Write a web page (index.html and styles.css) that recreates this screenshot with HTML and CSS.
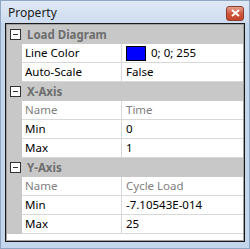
FILE: index.html
```html
<!DOCTYPE html>
<html lang="en">
<head>
    <meta charset="UTF-8">
    <title>Property</title>
    <link rel="stylesheet" href="styles.css">
</head>
<body>
    <div class="window">
        <div class="titlebar">
            <span class="title">Property</span>
            <div class="close">
                <svg width="9" height="8" viewBox="0 0 9 8"><path d="M1 1 L8 7 M8 1 L1 7" stroke="#fff" stroke-width="2"/></svg>
            </div>
        </div>
        <div class="grid">
            <div class="inner">
                <div class="row cat"><span class="toggle"></span><span>Load Diagram</span></div>
                <div class="row"><div class="gutter"></div><div class="name">Line Color</div><div class="value"><span class="swatch"></span>0; 0; 255</div></div>
                <div class="row"><div class="gutter"></div><div class="name">Auto-Scale</div><div class="value">False</div></div>

                <div class="row cat"><span class="toggle"></span><span>X-Axis</span></div>
                <div class="row ro"><div class="gutter"></div><div class="name">Name</div><div class="value">Time</div></div>
                <div class="row"><div class="gutter"></div><div class="name">Min</div><div class="value">0</div></div>
                <div class="row"><div class="gutter"></div><div class="name">Max</div><div class="value">1</div></div>

                <div class="row cat"><span class="toggle"></span><span>Y-Axis</span></div>
                <div class="row ro"><div class="gutter"></div><div class="name">Name</div><div class="value">Cycle Load</div></div>
                <div class="row"><div class="gutter"></div><div class="name">Min</div><div class="value">-7.10543E-014</div></div>
                <div class="row"><div class="gutter"></div><div class="name">Max</div><div class="value">25</div></div>
            </div>
        </div>
    </div>
</body>
</html>
```

FILE: styles.css
```css
body { margin: 0; font-family: "Noto Sans", "Liberation Sans", sans-serif; font-size: 11.5px; }
.window { width: 248px; height: 247px; border: 1px solid #8fa6c2; background: #c4d6ec; display: flex; flex-direction: column; }
.titlebar { height: 22px; display: flex; align-items: center; justify-content: space-between; padding: 0 5px 0 7px; background: linear-gradient(#dfe9f5, #cddcef); }
.title { color: #1b1b1b; font-size: 12px; padding-top: 1px; }
.close { width: 16px; height: 13px; margin-top: 2px; border: 1px solid #8a3c2e; border-radius: 3px; background: linear-gradient(#e8a08c, #d0573d 50%, #c4452c); display: flex; align-items: center; justify-content: center; }
.grid { margin: 0 4px; border: 1px solid #1a1a1a; height: 217px; background: #fff; }
.inner { border: 1px solid #a0a0a0; height: 215px; background: #fff; }
.row { display: flex; height: 19px; }
.gutter { width: 15px; background: #c8c8c8; }
.row .name { width: 96px; padding-left: 3px; border-right: 1px solid #d8d8d8; border-bottom: 1px solid #d8d8d8; line-height: 18px; color: #000; }
.row .value { flex: 1; padding-left: 4px; line-height: 18px; display: flex; align-items: center; color: #000; border-bottom: 1px solid #d8d8d8; }
.row.ro .name, .row.ro .value { color: #808080; }
.cat { background: #c8c8c8; align-items: center; font-weight: bold; color: #6e6e6e; }
.toggle { width: 9px; height: 9px; border: 1px solid #333; margin: 0 6px 0 3px; position: relative; background: #fff; }
.toggle::after { content: ""; position: absolute; left: 2px; top: 4px; width: 5px; height: 1px; background: #333; }
.swatch { width: 18px; height: 13px; border: 1px solid #000; background: #0000ff; margin-right: 5px; }
```
